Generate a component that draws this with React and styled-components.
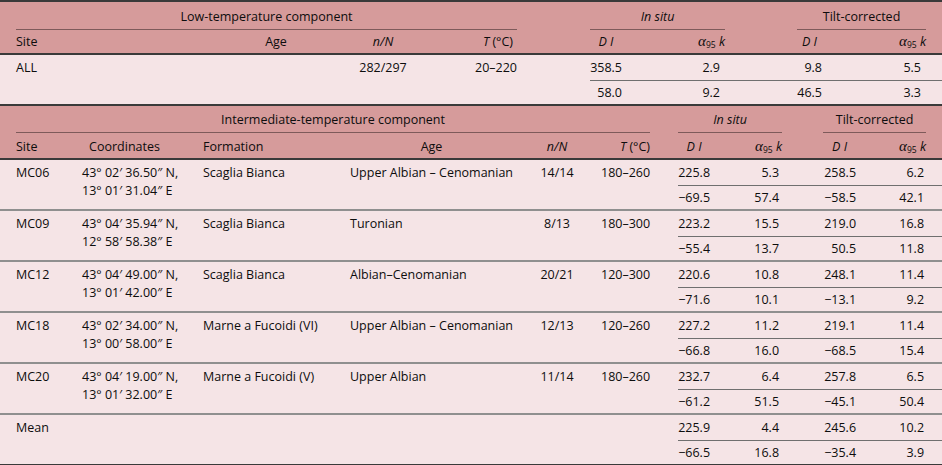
import React from 'react';
import styled, { createGlobalStyle } from 'styled-components';

const HEAD = '#d69b9b';
const BODY = '#f5e4e6';
const DARK = '#3a3a3a';
const GRAY = '#8f8f8f';
const SUB = '#6f6f6f';
const RULE = '#7e5a5a';

const GlobalStyle = createGlobalStyle`
  html, body { margin: 0; padding: 0; background: #ffffff; }
  body {
    font-family: "Open Sans", "Noto Sans", sans-serif;
    font-size: 12.5px;
    color: #0d0d0d;
  }
`;

const Page = styled.div`
  width: 942px;
  display: flex;
  flex-direction: column;
`;

const Table = styled.table`
  width: 942px;
  table-layout: fixed;
  border-collapse: separate;
  border-spacing: 0;
  border-top: ${p => (p.$top ? `2px solid ${DARK}` : 'none')};
`;

const HeadRow = styled.tr`
  & > th {
    padding-top: ${p => p.$pt}px;
    padding-bottom: ${p => p.$pb}px;
  }
`;

const HeadCell = styled.th`
  background: ${HEAD};
  font-weight: normal;
  line-height: 18px;
  white-space: nowrap;
  padding-left: 0;
  padding-right: ${p => p.$pr || 0}px;
  text-align: ${p => p.$align || 'left'};
  font-style: ${p => (p.$italic ? 'italic' : 'normal')};
  border-bottom: ${p =>
    p.$rule ? `1px solid ${RULE}` : p.$base ? `2px solid ${DARK}` : 'none'};
`;

const edgeBorder = p => {
  if (p.$edge === 'sub') return `1px solid ${SUB}`;
  if (p.$edge === 'row') return `2px solid ${GRAY}`;
  if (p.$edge === 'end') return `2px solid ${DARK}`;
  return 'none';
};

const Cell = styled.td`
  background: ${BODY};
  line-height: 18px;
  vertical-align: top;
  white-space: nowrap;
  text-align: ${p => p.$align || 'left'};
  padding: ${p => (p.$second ? '3px' : '4px')} ${p => p.$pr || 0}px
    ${p => (p.$second ? '2px' : '3px')} 0;
  border-bottom: ${edgeBorder};
`;

const StackCell = styled(Cell)`
  padding-bottom: 0;
`;

const Line = styled.div`
  line-height: 18px;
`;

const It = styled.span`
  font-style: italic;
`;

const Alpha = styled.span`
  font-family: "Liberation Serif", "DejaVu Serif", serif;
  font-style: italic;
  font-size: 15px;
`;

const Sub = styled.sub`
  font-size: 8.5px;
  vertical-align: -2px;
  line-height: 0;
`;

const AlphaK = () => (
  <>
    <Alpha>α</Alpha>
    <Sub>95</Sub> <It>k</It>
  </>
);

const DI = () => <It>D I</It>;
const NN = () => <It>n/N</It>;
const TC = () => (
  <>
    <It>T</It> (°C)
  </>
);

/* ---------- Table 1 ---------- */

const t1Cols = [16, 180, 160, 54, 107, 73, 32, 103, 72, 25, 104, 16];

const LowTable = () => (
  <Table $top>
    <colgroup>
      {t1Cols.map((w, i) => (
        <col key={i} style={{ width: w }} />
      ))}
    </colgroup>
    <thead>
      <HeadRow $pt={6} $pb={3}>
        <HeadCell />
        <HeadCell colSpan={4} $align="center" $rule>
          Low-temperature component
        </HeadCell>
        <HeadCell />
        <HeadCell colSpan={2} $align="center" $rule $italic>
          In situ
        </HeadCell>
        <HeadCell />
        <HeadCell colSpan={2} $align="center" $rule>
          Tilt-corrected
        </HeadCell>
        <HeadCell />
      </HeadRow>
      <HeadRow $pt={2} $pb={2}>
        <HeadCell $base />
        <HeadCell $base>Site</HeadCell>
        <HeadCell $base $align="center">Age</HeadCell>
        <HeadCell $base $align="center"><NN /></HeadCell>
        <HeadCell $base $align="right" $pr={4}><TC /></HeadCell>
        <HeadCell $base />
        <HeadCell $base $align="center"><DI /></HeadCell>
        <HeadCell $base $align="right"><AlphaK /></HeadCell>
        <HeadCell $base />
        <HeadCell $base $align="center"><DI /></HeadCell>
        <HeadCell $base $align="right"><AlphaK /></HeadCell>
        <HeadCell $base />
      </HeadRow>
    </thead>
    <tbody>
      <tr>
        <Cell rowSpan={2} $edge="end" />
        <Cell rowSpan={2} $edge="end">ALL</Cell>
        <Cell rowSpan={2} $edge="end" />
        <Cell rowSpan={2} $edge="end" $align="center">282/297</Cell>
        <Cell rowSpan={2} $edge="end" $align="right">20–220</Cell>
        <Cell rowSpan={2} $edge="end" />
        <Cell $edge="sub" $align="right">358.5</Cell>
        <Cell $edge="sub" $align="right" $pr={5}>2.9</Cell>
        <Cell $edge="sub" />
        <Cell $edge="sub" $align="right">9.8</Cell>
        <Cell $edge="sub" $align="right" $pr={5}>5.5</Cell>
        <Cell $edge="sub" />
      </tr>
      <tr>
        <Cell $second $edge="end" $align="right">58.0</Cell>
        <Cell $second $edge="end" $align="right" $pr={5}>9.2</Cell>
        <Cell $second $edge="end" />
        <Cell $second $edge="end" $align="right">46.5</Cell>
        <Cell $second $edge="end" $align="right" $pr={5}>3.3</Cell>
        <Cell $second $edge="end" />
      </tr>
    </tbody>
  </Table>
);

/* ---------- Table 2 ---------- */

const t2Cols = [16, 66, 121, 147, 163, 88, 49, 28, 32, 72, 41, 33, 70, 16];

const sites = [
  {
    site: 'MC06',
    coords: ['43° 02′ 36.50″ N,', '13° 01′ 31.04″ E'],
    formation: 'Scaglia Bianca',
    age: 'Upper Albian – Cenomanian',
    nN: '14/14',
    t: '180–260',
    top: ['225.8', '5.3', '258.5', '6.2'],
    bottom: ['−69.5', '57.4', '−58.5', '42.1'],
  },
  {
    site: 'MC09',
    coords: ['43° 04′ 35.94″ N,', '12° 58′ 58.38″ E'],
    formation: 'Scaglia Bianca',
    age: 'Turonian',
    nN: '8/13',
    t: '180–300',
    top: ['223.2', '15.5', '219.0', '16.8'],
    bottom: ['−55.4', '13.7', '50.5', '11.8'],
  },
  {
    site: 'MC12',
    coords: ['43° 04′ 49.00″ N,', '13° 01′ 42.00″ E'],
    formation: 'Scaglia Bianca',
    age: 'Albian–Cenomanian',
    nN: '20/21',
    t: '120–300',
    top: ['220.6', '10.8', '248.1', '11.4'],
    bottom: ['−71.6', '10.1', '−13.1', '9.2'],
  },
  {
    site: 'MC18',
    coords: ['43° 02′ 34.00″ N,', '13° 00′ 58.00″ E'],
    formation: 'Marne a Fucoidi (VI)',
    age: 'Upper Albian – Cenomanian',
    nN: '12/13',
    t: '120–260',
    top: ['227.2', '11.2', '219.1', '11.4'],
    bottom: ['−66.8', '16.0', '−68.5', '15.4'],
  },
  {
    site: 'MC20',
    coords: ['43° 04′ 19.00″ N,', '13° 01′ 32.00″ E'],
    formation: 'Marne a Fucoidi (V)',
    age: 'Upper Albian',
    nN: '11/14',
    t: '180–260',
    top: ['232.7', '6.4', '257.8', '6.5'],
    bottom: ['−61.2', '51.5', '−45.1', '50.4'],
  },
  {
    site: 'Mean',
    coords: [],
    formation: '',
    age: '',
    nN: '',
    t: '',
    top: ['225.9', '4.4', '245.6', '10.2'],
    bottom: ['−66.5', '16.8', '−35.4', '3.9'],
  },
];

const NumberCells = ({ values, second, edge }) => (
  <>
    <Cell $second={second} $edge={edge} $align="right">{values[0]}</Cell>
    <Cell $second={second} $edge={edge} $align="right" $pr={3}>{values[1]}</Cell>
    <Cell $second={second} $edge={edge} />
    <Cell $second={second} $edge={edge} $align="right">{values[2]}</Cell>
    <Cell $second={second} $edge={edge} $align="right" $pr={2}>{values[3]}</Cell>
    <Cell $second={second} $edge={edge} />
  </>
);

const SiteRows = ({ row, last }) => {
  const edge = last ? 'end' : 'row';
  return (
    <>
      <tr>
        <Cell rowSpan={2} $edge={edge} />
        <Cell rowSpan={2} $edge={edge}>{row.site}</Cell>
        <StackCell rowSpan={2} $edge={edge}>
          {row.coords.map(c => (
            <Line key={c}>{c}</Line>
          ))}
        </StackCell>
        <Cell rowSpan={2} $edge={edge}>{row.formation}</Cell>
        <Cell rowSpan={2} $edge={edge}>{row.age}</Cell>
        <Cell rowSpan={2} $edge={edge} $align="center">{row.nN}</Cell>
        <Cell rowSpan={2} $edge={edge} $align="right">{row.t}</Cell>
        <Cell rowSpan={2} $edge={edge} />
        <NumberCells values={row.top} edge="sub" />
      </tr>
      <tr>
        <NumberCells values={row.bottom} second edge={edge} />
      </tr>
    </>
  );
};

const IntermediateTable = () => (
  <Table>
    <colgroup>
      {t2Cols.map((w, i) => (
        <col key={i} style={{ width: w }} />
      ))}
    </colgroup>
    <thead>
      <HeadRow $pt={5} $pb={3}>
        <HeadCell />
        <HeadCell colSpan={6} $align="center" $rule>
          Intermediate-temperature component
        </HeadCell>
        <HeadCell />
        <HeadCell colSpan={2} $align="center" $rule $italic>
          In situ
        </HeadCell>
        <HeadCell />
        <HeadCell colSpan={2} $align="center" $rule>
          Tilt-corrected
        </HeadCell>
        <HeadCell />
      </HeadRow>
      <HeadRow $pt={4} $pb={2}>
        <HeadCell $base />
        <HeadCell $base>Site</HeadCell>
        <HeadCell $base $align="center" $pr={36}>Coordinates</HeadCell>
        <HeadCell $base>Formation</HeadCell>
        <HeadCell $base $align="center">Age</HeadCell>
        <HeadCell $base $align="center"><NN /></HeadCell>
        <HeadCell $base $align="right"><TC /></HeadCell>
        <HeadCell $base />
        <HeadCell $base $align="center"><DI /></HeadCell>
        <HeadCell $base $align="right"><AlphaK /></HeadCell>
        <HeadCell $base />
        <HeadCell $base $align="center"><DI /></HeadCell>
        <HeadCell $base $align="right"><AlphaK /></HeadCell>
        <HeadCell $base />
      </HeadRow>
    </thead>
    <tbody>
      {sites.map((row, i) => (
        <SiteRows key={row.site} row={row} last={i === sites.length - 1} />
      ))}
    </tbody>
  </Table>
);

export default function App() {
  return (
    <>
      <GlobalStyle />
      <Page>
        <LowTable />
        <IntermediateTable />
      </Page>
    </>
  );
}
